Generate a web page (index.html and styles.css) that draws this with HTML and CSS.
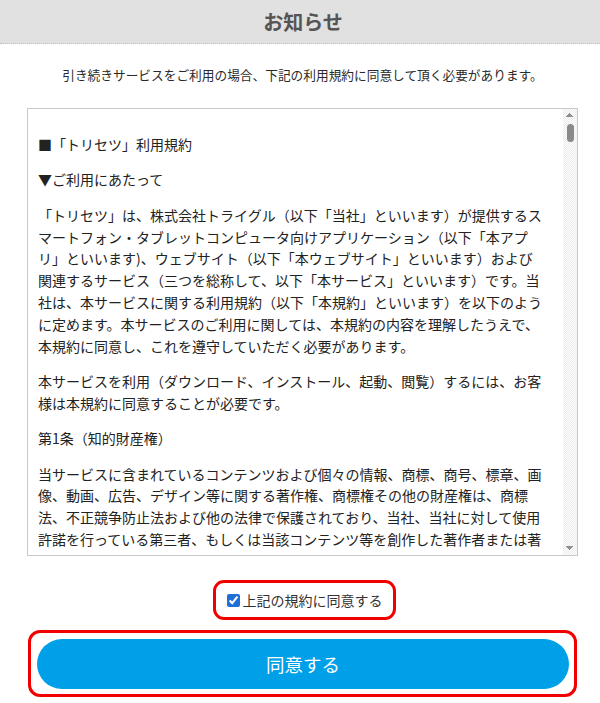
FILE: index.html
```html
<!DOCTYPE html>
<html lang="ja">
<head>
<meta charset="utf-8">
<title>お知らせ</title>
<link rel="stylesheet" href="styles.css">
</head>
<body>
<header class="topbar">
  <h1 class="topbar-title">お知らせ</h1>
</header>
<main class="page">
  <p class="intro">引き続きサービスをご利用の場合、下記の利用規約に同意して頂く必要があります。</p>
  <div class="terms">
    <div class="terms-body">
      <p>■「トリセツ」利用規約</p>
      <p>▼ご利用にあたって</p>
      <p>「トリセツ」は、株式会社トライグル（以下「当社」といいます）が提供するスマートフォン・タブレットコンピュータ向けアプリケーション（以下「本アプリ」といいます)、ウェブサイト（以下「本ウェブサイト」といいます）および関連するサービス（三つを総称して、以下「本サービス」といいます）です。当社は、本サービスに関する利用規約（以下「本規約」といいます）を以下のように定めます。本サービスのご利用に関しては、本規約の内容を理解したうえで、本規約に同意し、これを遵守していただく必要があります。</p>
      <p>本サービスを利用（ダウンロード、インストール、起動、閲覧）するには、お客様は本規約に同意することが必要です。</p>
      <p>第1条（知的財産権）</p>
      <p>当サービスに含まれているコンテンツおよび個々の情報、商標、商号、標章、画像、動画、広告、デザイン等に関する著作権、商標権その他の財産権は、商標法、不正競争防止法および他の法律で保護されており、当社、当社に対して使用許諾を行っている第三者、もしくは当該コンテンツ等を創作した著作者または著作権者に帰属しています。これらを当社および各権利者の明示の許諾なく使用することは、法律で認められている範囲を除き禁止します。</p>
      <p>第2条（禁止事項）</p>
      <p>お客様は、本サービスの利用にあたり、以下の行為を行ってはならないものとします。</p>
    </div>
    <div class="scrollbar" aria-hidden="true">
      <div class="scroll-arrow scroll-arrow-up"></div>
      <div class="scroll-track">
        <div class="scroll-thumb"></div>
      </div>
      <div class="scroll-arrow scroll-arrow-down"></div>
    </div>
  </div>
  <div class="agree-row">
    <label class="agree-check">
      <input type="checkbox" class="agree-input" checked>
      <span class="agree-label">上記の規約に同意する</span>
    </label>
  </div>
  <div class="submit-frame">
    <button type="button" class="submit-btn">同意する</button>
  </div>
</main>
</body>
</html>
```

FILE: styles.css
```css
html, body {
  margin: 0;
  padding: 0;
  background: #fff;
}

body {
  font-family: "Noto Sans CJK JP", "Noto Sans", sans-serif;
  color: #333;
  text-spacing-trim: space-all;
}

.topbar {
  height: 43px;
  background: #e1e1e1;
  border-bottom: 1px dotted #bdbdbd;
  display: flex;
  align-items: center;
  justify-content: center;
}

.topbar-title {
  margin: 0 0 0 6px;
  font-size: 20px;
  font-weight: bold;
  color: #555;
  line-height: 1;
}

.page {
  width: 551px;
  margin-left: 27px;
  display: flex;
  flex-direction: column;
}

.intro {
  margin: 21px 0 23px;
  font-size: 12.7px;
  line-height: 20px;
  text-align: center;
  color: #2a2a2a;
}

.terms {
  box-sizing: border-box;
  height: 448px;
  border: 1px solid #c8c8c8;
  display: flex;
}

.terms-body {
  flex: 1;
  min-width: 0;
  overflow: hidden;
  padding: 11.5px 19px 0 10px;
  font-size: 14px;
  line-height: 21.8px;
  color: #222;
}

.terms-body p {
  margin: 13.6px 0;
}

.scrollbar {
  width: 14px;
  flex: none;
  display: flex;
  flex-direction: column;
  background: repeating-conic-gradient(#ebebeb 0 25%, #fff 0 50%) 0 0 / 2px 2px;
}

.scroll-arrow {
  height: 14px;
  flex: none;
}

.scroll-arrow-up {
  background:
    linear-gradient(to top left, #8f8f8f 50%, transparent 50%) 3px 4px / 4px 4px no-repeat,
    linear-gradient(to top right, #8f8f8f 50%, transparent 50%) 7px 4px / 4px 4px no-repeat;
}

.scroll-arrow-down {
  background:
    linear-gradient(to bottom left, #8f8f8f 50%, transparent 50%) 3px 5px / 4px 4px no-repeat,
    linear-gradient(to bottom right, #8f8f8f 50%, transparent 50%) 7px 5px / 4px 4px no-repeat;
}

.scroll-track {
  flex: 1;
  padding: 1px 3px 0 4px;
}

.scroll-thumb {
  height: 18px;
  border-radius: 4px;
  background: #8a8a8a;
}

.agree-row {
  display: flex;
  justify-content: center;
  margin-top: 24px;
  padding-left: 4px;
}

.agree-check {
  box-sizing: border-box;
  height: 40px;
  width: 183px;
  border: 3px solid #f20000;
  border-radius: 11px;
  display: flex;
  align-items: center;
  justify-content: center;
  gap: 3px;
  font-size: 14px;
  line-height: 20px;
  color: #333;
}

.agree-input {
  margin: 0;
  width: 13px;
  height: 13px;
  accent-color: #1f6fd6;
}

.submit-frame {
  box-sizing: border-box;
  margin: 10px 1px 0;
  border: 3px solid #f20000;
  border-radius: 12px;
  padding: 6px 5px 5px 6px;
}

.submit-btn {
  display: block;
  width: 100%;
  height: 50px;
  border: none;
  border-radius: 25px;
  background: #00a0e9;
  color: #fff;
  font-family: "Noto Sans CJK JP", "Noto Sans", sans-serif;
  font-size: 18.5px;
  line-height: 50px;
  padding: 0;
}
```
